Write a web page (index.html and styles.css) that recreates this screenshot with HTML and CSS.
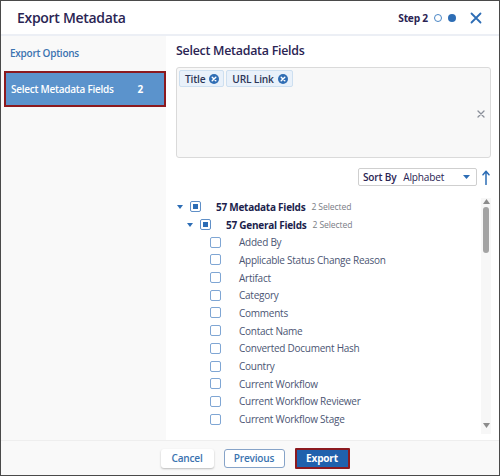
FILE: index.html
```html
<!DOCTYPE html>
<html>
<head>
<meta charset="utf-8">
<link rel="stylesheet" href="styles.css">
</head>
<body>
<div class="dialog">
  <div class="header">
    <div class="title">Export Metadata</div>
    <div class="steps">
      <span class="step-label">Step 2</span>
      <span class="dot dot-empty"></span>
      <span class="dot dot-full"></span>
      <svg class="close" width="12" height="12" viewBox="0 0 12 12"><path d="M1.5 1.5 L10.5 10.5 M10.5 1.5 L1.5 10.5" stroke="#2d6db5" stroke-width="1.8" stroke-linecap="round"/></svg>
    </div>
  </div>
  <div class="main">
    <div class="sidebar">
      <div class="nav-item">Export Options</div>
      <div class="nav-item nav-active"><span>Select Metadata Fields</span><span class="nav-count">2</span></div>
    </div>
    <div class="content">
      <div class="section-title">Select Metadata Fields</div>
      <div class="chipbox">
        <div class="chips">
          <span class="chip">Title <svg class="chip-x" width="10" height="10" viewBox="0 0 10 10"><circle cx="5" cy="5" r="5" fill="#2f6db4"/><path d="M3.2 3.2 L6.8 6.8 M6.8 3.2 L3.2 6.8" stroke="#fff" stroke-width="1.4" stroke-linecap="round"/></svg></span>
          <span class="chip">URL Link <svg class="chip-x" width="10" height="10" viewBox="0 0 10 10"><circle cx="5" cy="5" r="5" fill="#2f6db4"/><path d="M3.2 3.2 L6.8 6.8 M6.8 3.2 L3.2 6.8" stroke="#fff" stroke-width="1.4" stroke-linecap="round"/></svg></span>
        </div>
        <svg class="clear-x" width="8" height="8" viewBox="0 0 8 8"><path d="M1 1 L7 7 M7 1 L1 7" stroke="#8a8f99" stroke-width="1.3" stroke-linecap="round"/></svg>
      </div>
      <div class="sort-row">
        <div class="sort-box">
          <span class="sort-label">Sort By</span>
          <span class="sort-value">Alphabet</span>
          <svg class="sort-caret" width="7" height="4" viewBox="0 0 7 4"><path d="M0 0 L7 0 L3.5 4 Z" fill="#2d6db5"/></svg>
        </div>
        <svg class="sort-dir" width="8" height="15" viewBox="0 0 8 15"><path d="M4 14.5 L4 2 M1 4.8 L4 1.2 L7 4.8" stroke="#2d6db5" stroke-width="1.5" fill="none" stroke-linecap="round" stroke-linejoin="round"/></svg>
      </div>
      <div class="tree">
        <div class="tree-list">
          <div class="row lvl0">
            <svg class="caret" width="6" height="4" viewBox="0 0 6 4"><path d="M0 0 L6 0 L3 4 Z" fill="#2d6db5"/></svg>
            <span class="cb cb-partial"><span class="cb-fill"></span></span>
            <span class="group-name">57 Metadata Fields</span>
            <span class="sel-count">2 Selected</span>
          </div>
          <div class="row lvl1">
            <svg class="caret" width="6" height="4" viewBox="0 0 6 4"><path d="M0 0 L6 0 L3 4 Z" fill="#2d6db5"/></svg>
            <span class="cb cb-partial"><span class="cb-fill"></span></span>
            <span class="group-name">57 General Fields</span>
            <span class="sel-count">2 Selected</span>
          </div>
          <div class="row item"><span class="cb"></span><span class="item-name">Added By</span></div>
          <div class="row item"><span class="cb"></span><span class="item-name">Applicable Status Change Reason</span></div>
          <div class="row item"><span class="cb"></span><span class="item-name">Artifact</span></div>
          <div class="row item"><span class="cb"></span><span class="item-name">Category</span></div>
          <div class="row item"><span class="cb"></span><span class="item-name">Comments</span></div>
          <div class="row item"><span class="cb"></span><span class="item-name">Contact Name</span></div>
          <div class="row item"><span class="cb"></span><span class="item-name">Converted Document Hash</span></div>
          <div class="row item"><span class="cb"></span><span class="item-name">Country</span></div>
          <div class="row item"><span class="cb"></span><span class="item-name">Current Workflow</span></div>
          <div class="row item"><span class="cb"></span><span class="item-name">Current Workflow Reviewer</span></div>
          <div class="row item"><span class="cb"></span><span class="item-name">Current Workflow Stage</span></div>
        </div>
        <div class="scrollbar">
          <svg class="sb-arrow" width="7" height="5" viewBox="0 0 7 5"><path d="M0 5 L7 5 L3.5 0 Z" fill="#8c8c8c"/></svg>
          <div class="sb-thumb"></div>
          <div class="sb-space"></div>
          <svg class="sb-arrow" width="7" height="5" viewBox="0 0 7 5"><path d="M0 0 L7 0 L3.5 5 Z" fill="#8c8c8c"/></svg>
        </div>
      </div>
    </div>
  </div>
  <div class="footer">
    <button class="btn btn-cancel">Cancel</button>
    <button class="btn btn-prev">Previous</button>
    <button class="btn btn-export">Export</button>
  </div>
</div>
</body>
</html>
```
FILE: styles.css
```css
* { box-sizing: border-box; }
html, body { margin: 0; padding: 0; }
body {
  width: 500px;
  height: 476px;
  font-family: "Open Sans", "Noto Sans", sans-serif;
  background: #fff;
}
.dialog {
  width: 500px;
  height: 476px;
  border: 1px solid #4a4a4a;
  display: flex;
  flex-direction: column;
  overflow: hidden;
}
.header {
  height: 35px;
  flex: none;
  border-bottom: 2px solid #eceff5;
  display: flex;
  align-items: center;
  justify-content: space-between;
  padding: 0 17px 0 16px;
}
.title {
  font-size: 14px;
  letter-spacing: -0.3px;
  font-weight: 600;
  color: #2a2453;
}
.steps {
  display: flex;
  align-items: center;
}
.step-label {
  font-size: 10.2px;
  letter-spacing: -0.2px;
  font-weight: 700;
  color: #2a2453;
  margin-right: 6px;
}
.dot {
  width: 8px;
  height: 8px;
  border-radius: 50%;
  margin-right: 6px;
}
.dot-empty { border: 1.3px solid #4a86c5; }
.dot-full { background: #2d6db5; }
.close { margin-left: 8px; }
.main {
  flex: 1;
  display: flex;
  min-height: 0;
}
.sidebar {
  width: 165px;
  flex: none;
  background: #f9f9f9;
}
.nav-item {
  height: 34px;
  display: flex;
  align-items: center;
  padding-left: 9px;
  font-size: 10px;
  letter-spacing: -0.25px;
  font-weight: 600;
  color: #3b73b0;
}
.nav-active {
  height: 36px;
  margin-top: 1px;
  margin-left: 3px;
  padding-left: 5px;
  padding-right: 21px;
  justify-content: space-between;
  background: #5b93cc;
  border: 2px solid #8c1a1f;
  color: #fff;
}
.nav-count { font-weight: 700; }
.content {
  flex: 1;
  display: flex;
  flex-direction: column;
  padding: 6px 8px 0 10px;
  min-width: 0;
}
.section-title {
  height: 18px;
  line-height: 18px;
  font-size: 12.4px;
  letter-spacing: -0.25px;
  font-weight: 600;
  color: #2a2453;
  margin-bottom: 7px;
}
.chipbox {
  height: 91px;
  flex: none;
  background: #f8f8f8;
  border: 1px solid #dadada;
  border-radius: 3px;
  display: flex;
  justify-content: space-between;
  align-items: flex-start;
  padding: 2px 5px 0 2px;
}
.chips {
  display: flex;
  gap: 2px;
}
.chip {
  height: 17px;
  display: inline-flex;
  align-items: center;
  gap: 4px;
  padding: 0 4px 0 5px;
  background: #e9f1fa;
  border: 1px solid #cddff0;
  border-radius: 2px;
  font-size: 10.2px;
  letter-spacing: -0.2px;
  font-weight: 600;
  color: #2b3557;
}
.chip-x { display: block; }
.clear-x { margin-top: 40px; }
.sort-row {
  margin-top: 10px;
  height: 18px;
  display: flex;
  justify-content: flex-end;
  align-items: center;
  gap: 5px;
  padding-right: 1px;
}
.sort-box {
  width: 119px;
  height: 18px;
  border: 1px solid #cfcfcf;
  border-radius: 2px;
  display: flex;
  align-items: center;
  padding: 0 6px 0 4px;
  font-size: 10.1px;
  letter-spacing: -0.2px;
}
.sort-label { font-weight: 600; color: #2a2453; }
.sort-value { margin-left: 7px; color: #2a2453; flex: 1; }
.tree {
  margin-top: 12px;
  height: 236px;
  display: flex;
}
.tree-list {
  flex: 1;
  padding-left: 1px;
}
.row {
  height: 17.7px;
  display: flex;
  align-items: center;
  font-size: 10px;
  letter-spacing: -0.25px;
}
.lvl1 { padding-left: 10px; }
.item { padding-left: 33px; }
.caret { margin-right: 7px; flex: none; }
.cb {
  width: 11px;
  height: 11px;
  border: 1.3px solid #7fa6d4;
  border-radius: 2px;
  background: #fff;
  flex: none;
  display: flex;
  align-items: center;
  justify-content: center;
}
.cb-partial { border-color: #5f8fc7; }
.cb-fill {
  width: 5px;
  height: 5px;
  background: #2d6db5;
}
.group-name {
  margin-left: 15px;
  font-weight: 700;
  color: #201e4c;
}
.sel-count {
  margin-left: 6px;
  font-size: 8.6px;
  letter-spacing: -0.1px;
  color: #7a7d86;
}
.item-name {
  margin-left: 18px;
  color: #4b5573;
}
.scrollbar {
  width: 10px;
  flex: none;
  background: #f7f7f7;
  display: flex;
  flex-direction: column;
  align-items: center;
  padding: 1px 0 6px;
  margin-left: 2px;
}
.sb-arrow { display: block; flex: none; }
.sb-thumb {
  margin-top: 3px;
  width: 6px;
  height: 46px;
  border-radius: 3px;
  background: #a3a3a3;
}
.sb-space { flex: 1; }
.footer {
  height: 35px;
  flex: none;
  background: #f9f9f9;
  border-top: 1px solid #eeeeee;
  display: flex;
  align-items: center;
  justify-content: center;
  padding-left: 10px;
  gap: 10px;
}
.btn {
  font-family: "Open Sans", "Noto Sans", sans-serif;
  font-size: 10.1px;
  letter-spacing: -0.2px;
  font-weight: 600;
  height: 19px;
  padding: 0;
  border-radius: 3px;
  cursor: pointer;
}
.btn-cancel {
  width: 53px;
  background: #fff;
  border: none;
  color: #3b73b0;
  box-shadow: 0 1px 2px rgba(0,0,0,0.25);
}
.btn-prev {
  width: 61px;
  background: #fff;
  border: 1px solid #86a3c8;
  color: #3b73b0;
}
.btn-export {
  width: 55px;
  height: 21px;
  background: #2061ad;
  border: 2px solid #8c1a1f;
  border-radius: 1px;
  color: #fff;
  font-weight: 700;
}
```
